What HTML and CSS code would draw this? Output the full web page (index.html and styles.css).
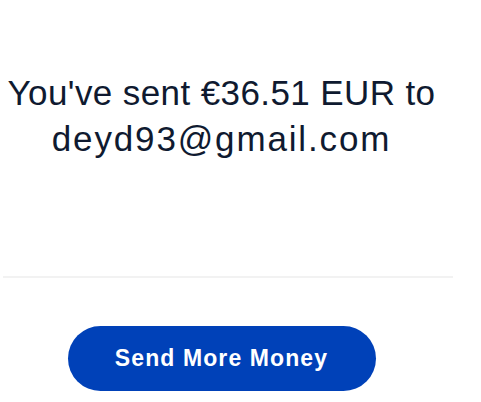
FILE: index.html
```html
<!DOCTYPE html>
<html lang="en">
<head>
<meta charset="utf-8">
<title>Sent</title>
<link rel="stylesheet" href="styles.css">
</head>
<body>
<main class="page">
  <section class="summary">
    <h1 class="message">You've sent €36.51 EUR to <span class="recipient">deyd93@gmail.com</span></h1>
  </section>
  <hr class="divider">
  <div class="actions">
    <button class="btn-primary" type="button">Send More Money</button>
  </div>
</main>
</body>
</html>
```
FILE: styles.css
```css
html, body {
  margin: 0;
  padding: 0;
  background: #ffffff;
}
body {
  width: 481px;
  height: 402px;
  overflow: hidden;
  font-family: "Liberation Sans", Arial, sans-serif;
}
.page {
  width: 456px;
  display: flex;
  flex-direction: column;
}
.summary {
  width: 443px;
  padding-top: 70px;
  padding-bottom: 114px;
}
.message {
  margin: 0;
  font-weight: 400;
  font-size: 35px;
  line-height: 46px;
  letter-spacing: 0.4px;
  color: #0f1a30;
  text-align: center;
}
.recipient {
  letter-spacing: 1.85px;
}
.divider {
  margin: 0 0 0 3px;
  width: 450px;
  height: 2px;
  border: 0;
  background: #f2f2f2;
}
.actions {
  width: 443px;
  display: flex;
  justify-content: center;
  padding-top: 48px;
}
.btn-primary {
  width: 308px;
  height: 65px;
  border: 0;
  border-radius: 33px;
  background: #0041b8;
  color: #ffffff;
  font-family: "Liberation Sans", Arial, sans-serif;
  font-weight: 700;
  font-size: 23px;
  letter-spacing: 1.1px;
  padding: 0;
}
```
